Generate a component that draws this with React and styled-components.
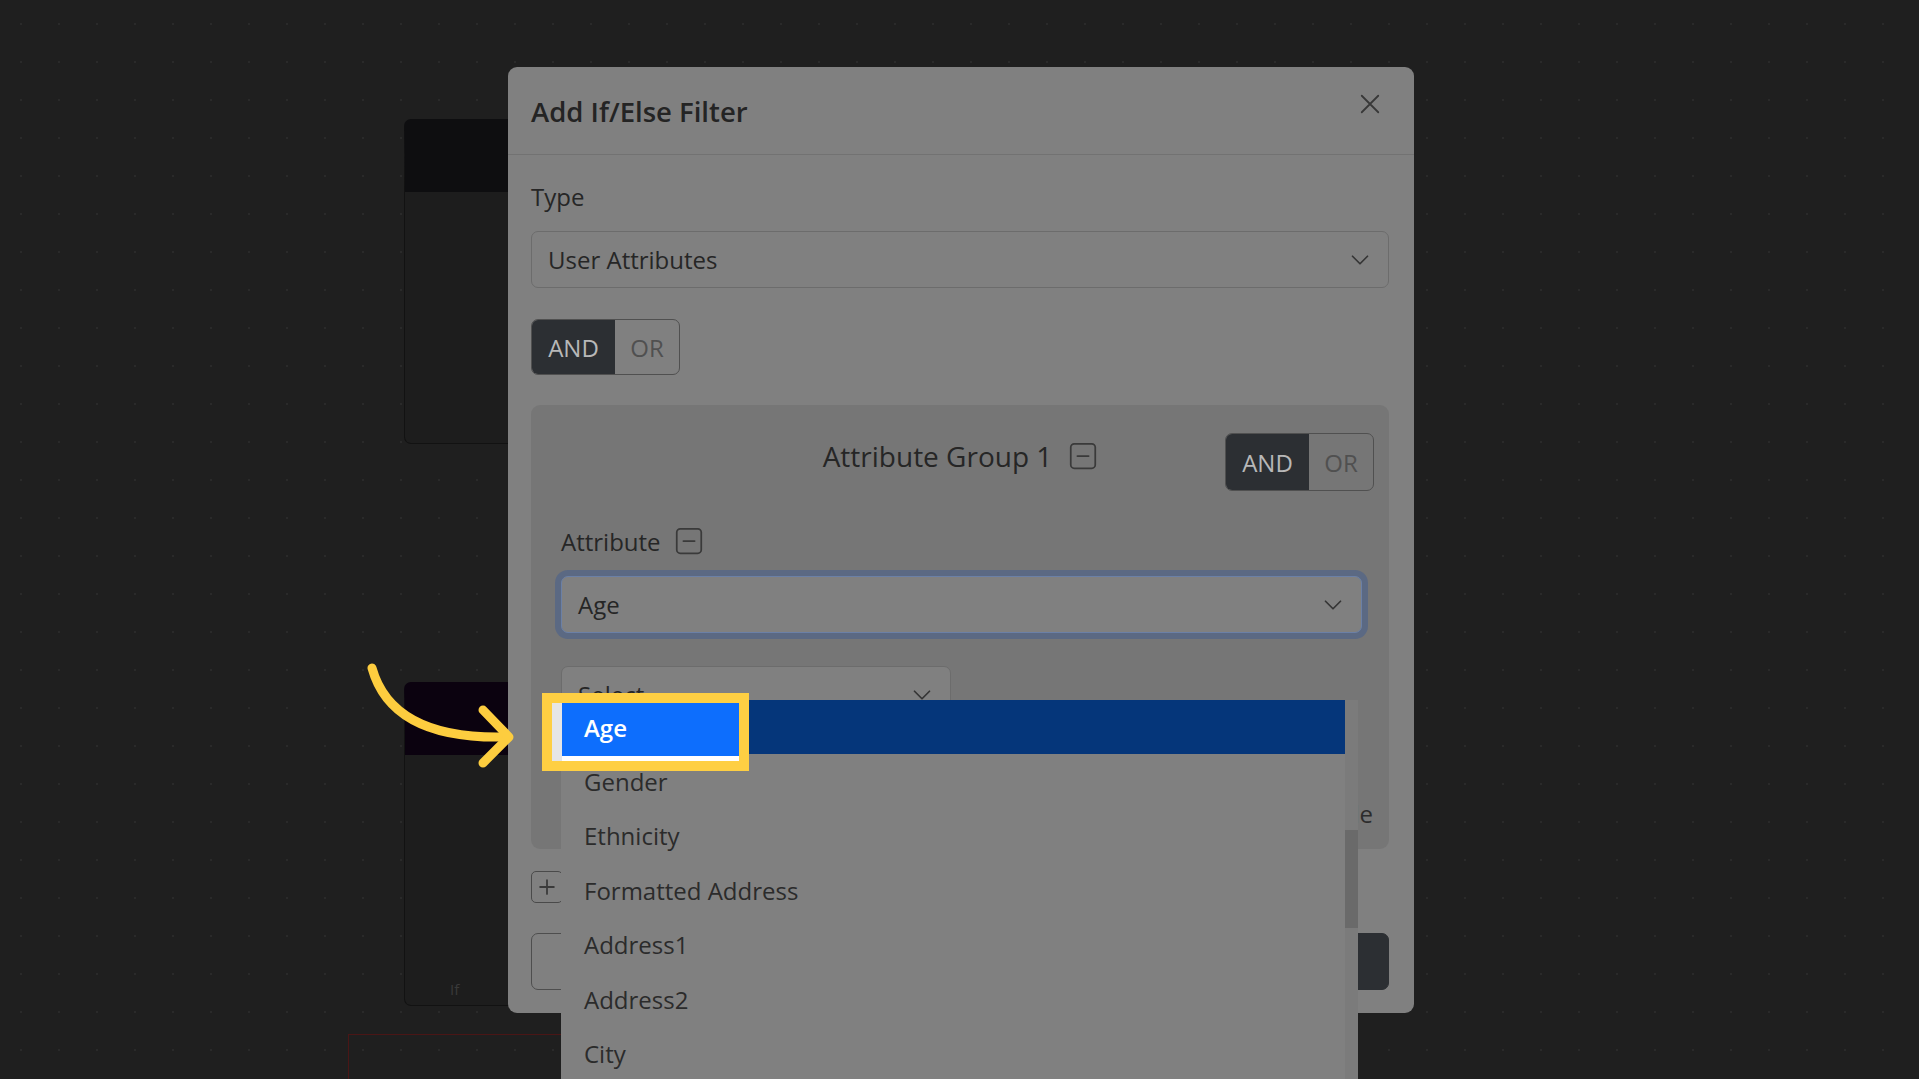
import React from 'react';
import styled, { createGlobalStyle } from 'styled-components';

const GlobalStyle = createGlobalStyle`
  html, body {
    margin: 0;
    padding: 0;
    background: #1f1f1f;
    font-family: "Open Sans", "Noto Sans", sans-serif;
  }
  * { box-sizing: border-box; }
`;

const options = [
  'Age',
  'Gender',
  'Ethnicity',
  'Formatted Address',
  'Address1',
  'Address2',
  'City',
  'State',
];

const Chevron = ({ size = 20 }) => (
  <svg width={size} height={size} viewBox="0 0 16 16" fill="none">
    <path d="M2 5l6 6 6-6" stroke="#353535" strokeWidth="1.4" strokeLinecap="round" strokeLinejoin="round" />
  </svg>
);

const SquareIcon = ({ plus }) => (
  <svg width="28" height="28" viewBox="0 0 16 16" fill="none">
    <rect x="1" y="1" width="14" height="14" rx="2" stroke="#3a3a3a" strokeWidth="1" />
    <path d="M4.8 8h6.4" stroke="#3a3a3a" strokeWidth="1" strokeLinecap="round" />
    {plus && <path d="M8 4.8v6.4" stroke="#3a3a3a" strokeWidth="1" strokeLinecap="round" />}
  </svg>
);

const App = () => {
  return (
    <>
      <GlobalStyle />
      <Canvas>
        <NodeCard top={119} height={325} head="#0e0e10" />
        <NodeCard top={682} height={324} head="#0b020f">
          <NodeLabel>If</NodeLabel>
        </NodeCard>
        <RedFrame />

        <Modal>
          <Header>
            <Title>Add If/Else Filter</Title>
            <CloseBtn>
              <svg width="22" height="22" viewBox="0 0 16 16" fill="none">
                <path d="M2 2l12 12M14 2L2 14" stroke="#383838" strokeWidth="1.3" strokeLinecap="round" />
              </svg>
            </CloseBtn>
          </Header>
          <Body>
            <Label>Type</Label>
            <Select>
              <span>User Attributes</span>
              <Chevron />
            </Select>
            <Toggle>
              <ToggleBtn active>AND</ToggleBtn>
              <ToggleBtn>OR</ToggleBtn>
            </Toggle>

            <Group>
              <GroupHead>
                <span />
                <GroupTitle>
                  Attribute Group 1
                  <SquareIcon />
                </GroupTitle>
                <Toggle tall>
                  <ToggleBtn active>AND</ToggleBtn>
                  <ToggleBtn>OR</ToggleBtn>
                </Toggle>
              </GroupHead>
              <AttrLabel>
                Attribute
                <SquareIcon />
              </AttrLabel>
              <Select focused>
                <span>Age</span>
                <Chevron />
              </Select>
              <Select small>
                <span>Select</span>
                <Chevron />
              </Select>
              <GroupFoot>
                <LinkText>Disable</LinkText>
              </GroupFoot>
            </Group>

            <AddBtn>
              <svg width="22" height="22" viewBox="0 0 16 16" fill="none">
                <path d="M8 3v10M3 8h10" stroke="#3a3a3a" strokeWidth="1.3" strokeLinecap="round" />
              </svg>
            </AddBtn>
            <Footer>
              <FootBtn />
              <FootBtn primary />
            </Footer>
          </Body>
        </Modal>

        <Dropdown>
          <OptionList>
            {options.map((o, i) => (
              <Option key={o} selected={i === 0}>
                {i === 0 ? '' : o}
              </Option>
            ))}
          </OptionList>
          <ScrollTrack>
            <ScrollThumb />
          </ScrollTrack>
        </Dropdown>

        <Highlight>
          <HighlightInner>
            <span>Age</span>
          </HighlightInner>
        </Highlight>

        <Arrow width="160" height="110" viewBox="0 0 160 110">
          <path
            d="M10 8 Q 30 80 144 77"
            stroke="#fdcd3f"
            strokeWidth="9"
            fill="none"
            strokeLinecap="round"
          />
          <path
            d="M121 50 L 147 77 L 121 103"
            stroke="#fdcd3f"
            strokeWidth="9"
            fill="none"
            strokeLinecap="round"
            strokeLinejoin="round"
          />
        </Arrow>
      </Canvas>
    </>
  );
};

const Canvas = styled.div`
  position: relative;
  width: 1919px;
  height: 1079px;
  overflow: hidden;
  background-color: #1f1f1f;
  background-image: radial-gradient(circle, #2a2a2a 1.2px, transparent 1.4px);
  background-size: 38px 38px;
  background-position: 2px 5px;
`;

const NodeCard = styled.div`
  position: absolute;
  left: 404px;
  top: ${props => props.top}px;
  width: 180px;
  height: ${props => props.height}px;
  border: 1.5px solid #121212;
  border-radius: 7px;
  background: #1d1d1d;
  border-top: 73px solid ${props => props.head};
  display: flex;
  align-items: flex-end;
`;

const NodeLabel = styled.span`
  padding: 0 0 6px 45px;
  font-size: 15px;
  color: #3a3a3a;
`;

const RedFrame = styled.div`
  position: absolute;
  left: 348px;
  top: 1034px;
  width: 300px;
  height: 80px;
  border: 1.5px solid #4a1616;
`;

const Modal = styled.div`
  position: absolute;
  left: 508px;
  top: 67px;
  width: 906px;
  height: 946px;
  background: #808080;
  border-radius: 9px;
  display: flex;
  flex-direction: column;
`;

const Header = styled.div`
  display: flex;
  align-items: center;
  justify-content: space-between;
  height: 88px;
  padding: 2px 33px 0 23px;
  border-bottom: 1.5px solid #727272;
`;

const Title = styled.h1`
  margin: 0;
  font-size: 27.5px;
  font-weight: 600;
  color: #242424;
`;

const CloseBtn = styled.div`
  display: flex;
  margin-top: -16px;
`;

const Body = styled.div`
  display: flex;
  flex-direction: column;
  align-items: flex-start;
  padding: 24px 25px 0 23px;
`;

const Label = styled.div`
  font-size: 24px;
  line-height: 36px;
  color: #262626;
  margin-bottom: 16px;
`;

const Select = styled.div`
  display: flex;
  align-items: center;
  justify-content: space-between;
  width: ${props => (props.small ? '390px' : '100%')};
  height: 57px;
  margin-top: ${props => (props.small ? '33px' : '0')};
  padding: 0 18px 0 16px;
  font-size: 24px;
  color: #262626;
  background: #808080;
  border: 1.5px solid ${props => (props.focused ? '#6b80a6' : '#6c6c6c')};
  border-radius: 7px;
  box-shadow: ${props => (props.focused ? '0 0 0 6px #5b6983' : 'none')};
`;

const Toggle = styled.div`
  display: flex;
  margin-top: ${props => (props.tall ? '0' : '31px')};
  height: ${props => (props.tall ? '58px' : '56px')};
  border: 1.5px solid #505050;
  border-radius: 7px;
  overflow: hidden;
  justify-self: end;
`;

const ToggleBtn = styled.div`
  display: flex;
  align-items: center;
  justify-content: center;
  width: ${props => (props.active ? '83px' : '64px')};
  font-size: 24px;
  color: ${props => (props.active ? '#b8b8b8' : '#505050')};
  background: ${props => (props.active ? '#2c2f33' : 'transparent')};
`;

const Group = styled.div`
  width: 100%;
  margin-top: 30px;
  padding: 28px 27px 17px 30px;
  background: #767676;
  border-radius: 9px;
  display: flex;
  flex-direction: column;
  align-items: flex-start;
`;

const GroupHead = styled.div`
  display: grid;
  grid-template-columns: 1fr auto 1fr;
  align-items: start;
  width: calc(100% + 57px);
  margin: 0 -27px 0 -30px;
  padding: 0 15px;
`;

const GroupTitle = styled.div`
  display: flex;
  align-items: center;
  gap: 17px;
  height: 46px;
  font-size: 28px;
  color: #262626;
`;

const AttrLabel = styled.div`
  display: flex;
  align-items: center;
  gap: 14px;
  margin: 32px 0 17px;
  height: 36px;
  font-size: 24px;
  color: #262626;
`;

const GroupFoot = styled.div`
  display: flex;
  justify-content: flex-end;
  width: calc(100% + 11px);
  margin-top: 73px;
`;

const LinkText = styled.span`
  font-size: 24px;
  line-height: 36px;
  color: #2c2c2c;
`;

const AddBtn = styled.div`
  display: flex;
  align-items: center;
  justify-content: center;
  width: 32px;
  height: 32px;
  margin-top: 22px;
  border: 1.5px solid #4a4a4a;
  border-radius: 5px;
`;

const Footer = styled.div`
  display: flex;
  justify-content: space-between;
  width: 100%;
  margin-top: 30px;
`;

const FootBtn = styled.div`
  width: 160px;
  height: 57px;
  border-radius: 7px;
  background: ${props => (props.primary ? '#2c2f33' : 'transparent')};
  border: 1.5px solid ${props => (props.primary ? '#2c2f33' : '#4e4e4e')};
`;

const Dropdown = styled.div`
  position: absolute;
  left: 561px;
  top: 700px;
  width: 797px;
  height: 379px;
  display: flex;
  background: #808080;
  overflow: hidden;
`;

const OptionList = styled.div`
  flex: 1;
  display: flex;
  flex-direction: column;
`;

const Option = styled.div`
  flex: none;
  height: ${props => (props.selected ? '54px' : '54.5px')};
  display: flex;
  align-items: center;
  padding-left: 23px;
  font-size: 24px;
  color: #2b2b2b;
  background: ${props => (props.selected ? '#05367a' : 'transparent')};
`;

const ScrollTrack = styled.div`
  width: 13px;
  background: #7b7b7b;
  padding-top: 130px;
`;

const ScrollThumb = styled.div`
  height: 98px;
  background: #6a6a6a;
`;

const Highlight = styled.div`
  position: absolute;
  left: 542px;
  top: 693px;
  width: 207px;
  height: 78px;
  border: 10px solid #fecf43;
  background: #e6e6e6;
  padding-left: 10px;
`;

const HighlightInner = styled.div`
  height: 100%;
  background: #ffffff;
  padding-bottom: 5px;

  span {
    display: flex;
    align-items: center;
    height: 100%;
    padding: 0 0 5px 22px;
    background: #0d6efd;
    font-size: 24px;
    font-weight: 600;
    color: #ffffff;
  }
`;

const Arrow = styled.svg`
  position: absolute;
  left: 362px;
  top: 660px;
  overflow: visible;
`;

export default App;
